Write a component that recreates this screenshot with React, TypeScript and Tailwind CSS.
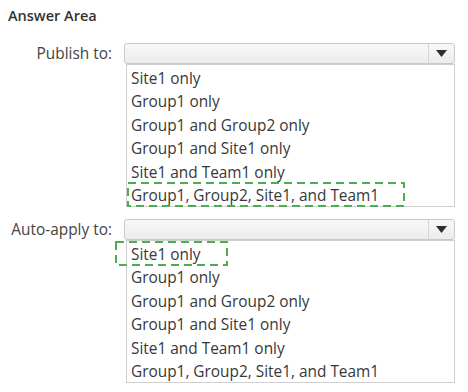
import React from "react";

const items = [
  "Site1 only",
  "Group1 only",
  "Group1 and Group2 only",
  "Group1 and Site1 only",
  "Site1 and Team1 only",
  "Group1, Group2, Site1, and Team1",
];

function DashBox({ className }: { className: string }) {
  return (
    <svg className={"absolute pointer-events-none " + className} preserveAspectRatio="none">
      <rect x="1" y="1" width="calc(100% - 2px)" height="calc(100% - 2px)" fill="none" stroke="#4cae50" strokeWidth="2" strokeDasharray="8 5" />
    </svg>
  );
}

function SelectBar() {
  return (
    <div className="flex h-[21px] w-[331px] rounded-[3px] border border-[#c9c9c9] bg-gradient-to-b from-[#f8f8f8] to-[#ececec]">
      <div className="flex-1" />
      <div className="flex w-[26px] items-center justify-center border-l border-[#d4d4d4]">
        <svg width="11" height="7" viewBox="0 0 11 7">
          <path d="M0 0 L11 0 L5.5 7 Z" fill="#2e2e2e" />
        </svg>
      </div>
    </div>
  );
}

function List({ mark }: { mark: number }) {
  return (
    <div className="ml-[2px] w-[329px] border border-[#cfcfcf] bg-white">
      {items.map((t, i) => (
        <div key={t} className="relative flex h-[23.5px] items-center pl-[4px] pt-[3px]">
          <span>{t}</span>
          {i === mark && mark === 5 && <DashBox className="left-0 top-[-1px] h-[25px] w-[278px]" />}
          {i === mark && mark === 0 && <DashBox className="left-[-12px] top-0 h-[25px] w-[113px]" />}
        </div>
      ))}
    </div>
  );
}

export default function App() {
  return (
    <div
      className="h-[392px] w-[468px] bg-white text-[#383838]"
      style={{ fontFamily: '"Open Sans", "Noto Sans", sans-serif' }}
    >
      <div className="pl-[8px] pt-[6px] text-[14.5px] font-semibold leading-[20px] text-[#333]">Answer Area</div>
      <div className="mt-[17px] text-[15.4px]">
        <div className="flex items-start">
          <div className="flex h-[21px] w-[112px] items-center justify-end text-[#444]">Publish to:</div>
          <div className="ml-[12px]">
            <SelectBar />
            <List mark={5} />
          </div>
        </div>
        <div className="mt-[12px] flex items-start">
          <div className="flex h-[21px] w-[112px] items-center justify-end text-[#444]">Auto-apply to:</div>
          <div className="ml-[12px]">
            <SelectBar />
            <List mark={0} />
          </div>
        </div>
      </div>
    </div>
  );
}
